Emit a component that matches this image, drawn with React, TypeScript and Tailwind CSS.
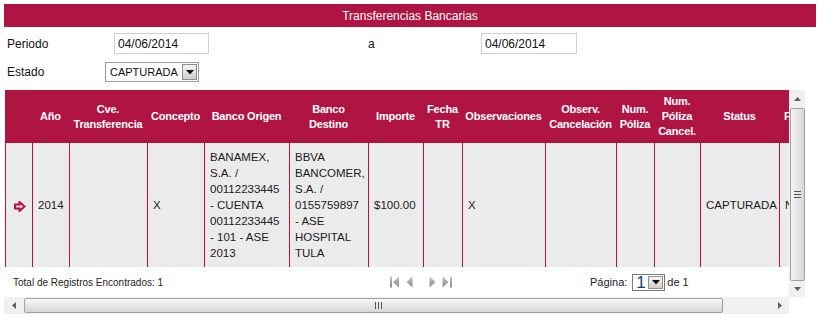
import React from "react";

type Col = { w: number; h: string[]; body: string[] | "arrow"; left?: boolean };

const cols: Col[] = [
  { w: 27, h: [], body: "arrow" },
  { w: 37, h: ["Año"], body: ["2014"] },
  { w: 78, h: ["Cve.", "Transferencia"], body: [] },
  { w: 57, h: ["Concepto"], body: ["X"] },
  { w: 85, h: ["Banco Origen"], body: ["BANAMEX,", "S.A. /", "00112233445", "- CUENTA", "00112233445", "- 101 - ASE", "2013"] },
  { w: 79, h: ["Banco", "Destino"], body: ["BBVA", "BANCOMER,", "S.A. /", "0155759897", "- ASE", "HOSPITAL", "TULA"] },
  { w: 55, h: ["Importe"], body: ["$100.00"] },
  { w: 39, h: ["Fecha", "TR"], body: [] },
  { w: 83, h: ["Observaciones"], body: ["X"] },
  { w: 71, h: ["Observ.", "Cancelación"], body: [] },
  { w: 38, h: ["Num.", "Póliza"], body: [] },
  { w: 46, h: ["Num.", "Póliza", "Cancel."], body: [] },
  { w: 79, h: ["Status"], body: ["CAPTURADA"] },
  { w: 90, h: ["Fecha Registro"], body: ["N/A"], left: true },
];

function DownBtn({ w = 14, h = 16 }: { w?: number; h?: number }) {
  return (
    <div
      className="flex shrink-0 items-center justify-center border border-[#8e8e8e] bg-gradient-to-b from-[#f4f4f4] to-[#cfcfcf]"
      style={{ width: w, height: h }}
    >
      <svg width="8" height="5" viewBox="0 0 8 5">
        <polygon points="0,0 8,0 4,4.5" fill="#111" />
      </svg>
    </div>
  );
}

function PagerIcon({ kind }: { kind: "first" | "prev" | "next" | "last" }) {
  const g = (
    <defs>
      <linearGradient id={"pg" + kind} x1="0" y1="0" x2="0" y2="1">
        <stop offset="0" stopColor="#c4c4c4" />
        <stop offset="1" stopColor="#8a8a8a" />
      </linearGradient>
    </defs>
  );
  const fill = `url(#pg${kind})`;
  if (kind === "first")
    return (
      <svg width="10" height="12" viewBox="0 0 10 12">
        {g}
        <rect x="0" y="0.5" width="2" height="11" fill={fill} />
        <polygon points="9,0.5 3,6 9,11.5" fill={fill} />
      </svg>
    );
  if (kind === "prev")
    return (
      <svg width="7" height="12" viewBox="0 0 7 12">
        {g}
        <polygon points="6.5,0.5 0.5,6 6.5,11.5" fill={fill} />
      </svg>
    );
  if (kind === "next")
    return (
      <svg width="7" height="12" viewBox="0 0 7 12">
        {g}
        <polygon points="0.5,0.5 6.5,6 0.5,11.5" fill={fill} />
      </svg>
    );
  return (
    <svg width="11" height="12" viewBox="0 0 11 12">
      {g}
      <polygon points="0.5,0.5 6.5,6 0.5,11.5" fill={fill} />
      <rect x="8" y="0.5" width="2" height="11" fill={fill} />
    </svg>
  );
}

export default function App() {
  return (
    <div className="relative h-[318px] w-[820px] overflow-hidden bg-white font-['Liberation_Sans',Arial,sans-serif] text-[#111]">
      {/* Title */}
      <div className="px-[4px] pt-[4px]">
        <div className="flex h-[23px] items-center justify-center bg-[#b01442] text-[12px] text-white">
          Transferencias Bancarias
        </div>
      </div>

      {/* Periodo row */}
      <div className="mt-[6px] flex h-[21px] items-center text-[12px]">
        <div className="w-[114px] pl-[7px]">Periodo</div>
        <div className="flex h-[21px] w-[95px] items-center border border-[#cfcfcf] pl-[3px]">04/06/2014</div>
        <div className="w-[272px] pl-[159px]">a</div>
        <div className="flex h-[21px] w-[96px] items-center border border-[#cfcfcf] pl-[3px]">04/06/2014</div>
      </div>

      {/* Estado row */}
      <div className="mt-[8px] flex h-[20px] items-center text-[12px]">
        <div className="w-[105px] pl-[7px]">Estado</div>
        <div className="flex h-[20px] w-[94px] items-center justify-between border border-[#9b9b9b] pl-[4px] pr-[1px]">
          <span className="text-[11px]">CAPTURADA</span>
          <DownBtn w={15} h={16} />
        </div>
      </div>

      {/* Grid */}
      <div className="mt-[8px] ml-[4px] flex">
        <div className="w-[785px]">
          <div className="h-[207px] overflow-hidden pl-px">
            {/* header */}
            <div className="flex h-[53px] w-max bg-[#b01442]">
              {cols.map((c, i) => (
                <div
                  key={i}
                  className={`flex shrink-0 flex-col justify-center text-[11px] font-bold leading-[15px] tracking-[-0.2px] text-white ${
                    c.left ? "items-start pl-[5px]" : "items-center text-center"
                  }`}
                  style={{ width: c.w }}
                >
                  {c.h.map((t, j) => (
                    <span key={j} className="whitespace-nowrap">
                      {t}
                    </span>
                  ))}
                </div>
              ))}
            </div>
            {/* data row */}
            <div className="flex h-[124px] w-max bg-[#ebebeb]">
              {cols.map((c, i) => (
                <div
                  key={i}
                  className={`flex shrink-0 items-center border-l border-[#b01442] text-[11.5px] leading-[16px] text-[#1a1a1a] ${
                    c.body === "arrow" ? "justify-center" : "pl-[5px]"
                  }`}
                  style={{ width: c.w }}
                >
                  {c.body === "arrow" ? (
                    <svg width="12" height="11" viewBox="0 0 12 11" className="ml-[1px] mt-[2px]">
                      <polygon
                        points="1,3.5 5.5,3.5 5.5,1 10.5,5.5 5.5,10 5.5,7.5 1,7.5"
                        fill="#f6d6e0"
                        stroke="#b01442"
                        strokeWidth="2"
                        strokeLinejoin="miter"
                      />
                    </svg>
                  ) : (
                    <div className="flex flex-col">
                      {c.body.map((t, j) => (
                        <span key={j} className="whitespace-nowrap">
                          {t}
                        </span>
                      ))}
                    </div>
                  )}
                </div>
              ))}
            </div>
            {/* footer */}
            <div className="flex h-[30px] items-center text-[10px] text-[#222]">
              <div className="w-[385px] pl-[8px]">Total de Registros Encontrados: 1</div>
              <div className="flex w-[200px] items-center">
                <PagerIcon kind="first" />
                <div className="ml-[6px]">
                  <PagerIcon kind="prev" />
                </div>
                <div className="ml-[16px]">
                  <PagerIcon kind="next" />
                </div>
                <div className="ml-[6px]">
                  <PagerIcon kind="last" />
                </div>
              </div>
              <span className="text-[11px]">Página:</span>
              <div className="ml-[5px] flex h-[17px] w-[33px] items-center justify-between border border-[#7a7a7a] pl-[3px] pr-[1px]">
                <span className="text-[17px] leading-none text-[#1f3c7a]">1</span>
                <DownBtn w={15} h={13} />
              </div>
              <span className="ml-[2px] text-[11px]">de 1</span>
            </div>
          </div>
          {/* horizontal scrollbar */}
          <div className="flex h-[17px] items-center bg-[#f0f0f0]">
            <div className="flex w-[20px] items-center justify-center">
              <svg width="4" height="7" viewBox="0 0 4 7">
                <polygon points="4,0 0,3.5 4,7" fill="#606060" />
              </svg>
            </div>
            <div className="flex h-[15px] w-[699px] items-center justify-end rounded-[2px] border border-[#a0a0a0] bg-gradient-to-b from-[#f6f6f6] to-[#d6d6d6] pr-[340px]">
              <div className="flex gap-[2px]">
                <div className="h-[7px] w-px bg-[#555]" />
                <div className="h-[7px] w-px bg-[#555]" />
                <div className="h-[7px] w-px bg-[#555]" />
              </div>
            </div>
            <div className="flex flex-1 items-center justify-end pr-[7px]">
              <svg width="4" height="7" viewBox="0 0 4 7">
                <polygon points="0,0 4,3.5 0,7" fill="#606060" />
              </svg>
            </div>
          </div>
        </div>
        {/* vertical scrollbar */}
        <div className="flex w-[16px] flex-col">
          <div className="flex h-[207px] flex-col items-center bg-[#f0f0f0]">
            <div className="flex h-[18px] items-center justify-center">
              <svg width="7" height="4" viewBox="0 0 7 4">
                <polygon points="0,4 3.5,0 7,4" fill="#606060" />
              </svg>
            </div>
            <div className="flex h-[173px] w-[15px] flex-col items-center justify-center rounded-[2px] border border-[#a0a0a0] bg-gradient-to-r from-[#f6f6f6] to-[#d6d6d6]">
              <div className="flex flex-col gap-[2px]">
                <div className="h-px w-[7px] bg-[#555]" />
                <div className="h-px w-[7px] bg-[#555]" />
                <div className="h-px w-[7px] bg-[#555]" />
              </div>
            </div>
            <div className="flex flex-1 items-center justify-center">
              <svg width="7" height="4" viewBox="0 0 7 4">
                <polygon points="0,0 7,0 3.5,4" fill="#606060" />
              </svg>
            </div>
          </div>
          <div className="h-[17px] bg-white" />
        </div>
      </div>
    </div>
  );
}
